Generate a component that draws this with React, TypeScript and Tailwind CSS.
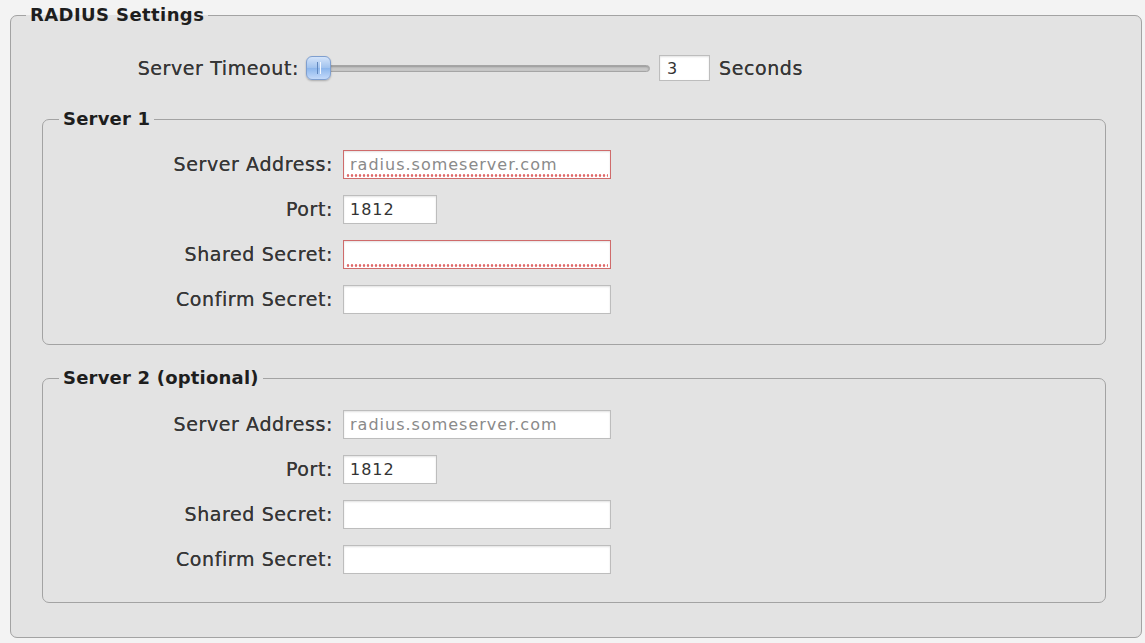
import React from "react";

function Field({
  width,
  value,
  error,
  muted,
}: {
  width: string;
  value: string;
  error?: boolean;
  muted?: boolean;
}) {
  return (
    <div
      className={
        "relative h-[29px] bg-white border shadow-[inset_0_1px_2px_rgba(0,0,0,0.12)] " +
        width +
        (error ? " border-[#cf6b6b]" : " border-[#bdbdbd]")
      }
    >
      <input
        readOnly
        defaultValue={value}
        className={
          "w-full h-full bg-transparent outline-none px-[6px] text-[16px] tracking-[1px] font-['DejaVu_Sans','Liberation_Sans',sans-serif] " +
          (muted ? "text-[#8a8a8a]" : "text-[#333333]")
        }
      />
      {error && (
        <span className="absolute left-[2px] right-[2px] bottom-[1px] h-[3px] bg-[radial-gradient(circle,#e06a6a_1px,transparent_1.6px)] bg-[length:4px_3px]" />
      )}
    </div>
  );
}

function Row({ label, children }: { label: string; children: React.ReactNode }) {
  return (
    <div className="flex items-center h-[29px]">
      <div className="w-[290px] text-right text-[19px] tracking-[0.6px] text-[#363636] [text-shadow:0_0_0.5px_#444] whitespace-nowrap">
        {label}
      </div>
      <div className="ml-[10px]">{children}</div>
    </div>
  );
}

function Server({
  title,
  error,
  className,
}: {
  title: string;
  error?: boolean;
  className: string;
}) {
  return (
    <fieldset
      className={
        "ml-[31px] mr-[35px] border border-[#a3a3a3] rounded-[7px] " + className
      }
    >
      <legend className="ml-[16px] px-[4px] text-[18px] leading-[22px] font-bold tracking-[0.2px] text-[#1e1e1e]">
        {title}
      </legend>
      <div className="flex flex-col gap-[16px]">
        <Row label="Server Address:">
          <Field width="w-[268px]" value="radius.someserver.com" muted error={error} />
        </Row>
        <Row label="Port:">
          <Field width="w-[94px]" value="1812" />
        </Row>
        <Row label="Shared Secret:">
          <Field width="w-[268px]" value="" error={error} />
        </Row>
        <Row label="Confirm Secret:">
          <Field width="w-[268px]" value="" />
        </Row>
      </div>
    </fieldset>
  );
}

export default function App() {
  return (
    <div className="h-[643px] w-[1145px] bg-[#f3f3f3] pt-[4px] pl-[10px] pr-[3px] font-['DejaVu_Sans','Liberation_Sans',sans-serif] overflow-hidden">
      <fieldset className="border border-[#a3a3a3] rounded-[7px] bg-[#e3e3e3] pt-[29px] pb-[34px]">
        <legend className="ml-[15px] px-[4px] text-[18px] leading-[22px] font-bold tracking-[0.4px] text-[#1e1e1e]">
          RADIUS Settings
        </legend>

        <div className="flex items-center h-[26px]">
          <div className="w-[288px] text-right text-[19px] tracking-[0.6px] text-[#363636] [text-shadow:0_0_0.5px_#444] whitespace-nowrap">
            Server Timeout:
          </div>
          <div className="relative ml-[7px] w-[344px] h-[26px] flex items-center">
            <div className="ml-[4px] w-full h-[7px] rounded-full bg-[#c8c8c8] border border-[#a5a5a5] shadow-[inset_0_1px_2px_rgba(0,0,0,0.25)]" />
            <div className="absolute left-0 top-[1px] w-[25px] h-[24px] rounded-[6px] border border-[#7f9fcf] bg-[linear-gradient(to_bottom,#d4e4fa,#a0c2ee_50%,#8cb6ec_51%,#c4dafa)] shadow-[0_1px_2px_rgba(0,0,0,0.25)] flex items-center justify-center gap-[2px]">
              <span className="w-[1px] h-[12px] bg-[#5f86bd]" />
              <span className="w-[1px] h-[12px] bg-[#f4f8ff]" />
            </div>
          </div>
          <div className="ml-[9px]">
            <div className="relative h-[26px] w-[51px] bg-white border border-[#bdbdbd] shadow-[inset_0_1px_2px_rgba(0,0,0,0.12)]">
              <input
                readOnly
                defaultValue="3"
                className="w-full h-full bg-transparent outline-none px-[7px] text-[16px] text-[#333333] font-['DejaVu_Sans','Liberation_Sans',sans-serif]"
              />
            </div>
          </div>
          <div className="ml-[9px] text-[19px] tracking-[0.6px] text-[#363636] [text-shadow:0_0_0.5px_#444]">
            Seconds
          </div>
        </div>

        <Server title="Server 1" error className="mt-[27px] pt-[20px] pb-[30px]" />
        <Server title="Server 2 (optional)" className="mt-[22px] pt-[21px] pb-[28px]" />
      </fieldset>
    </div>
  );
}
